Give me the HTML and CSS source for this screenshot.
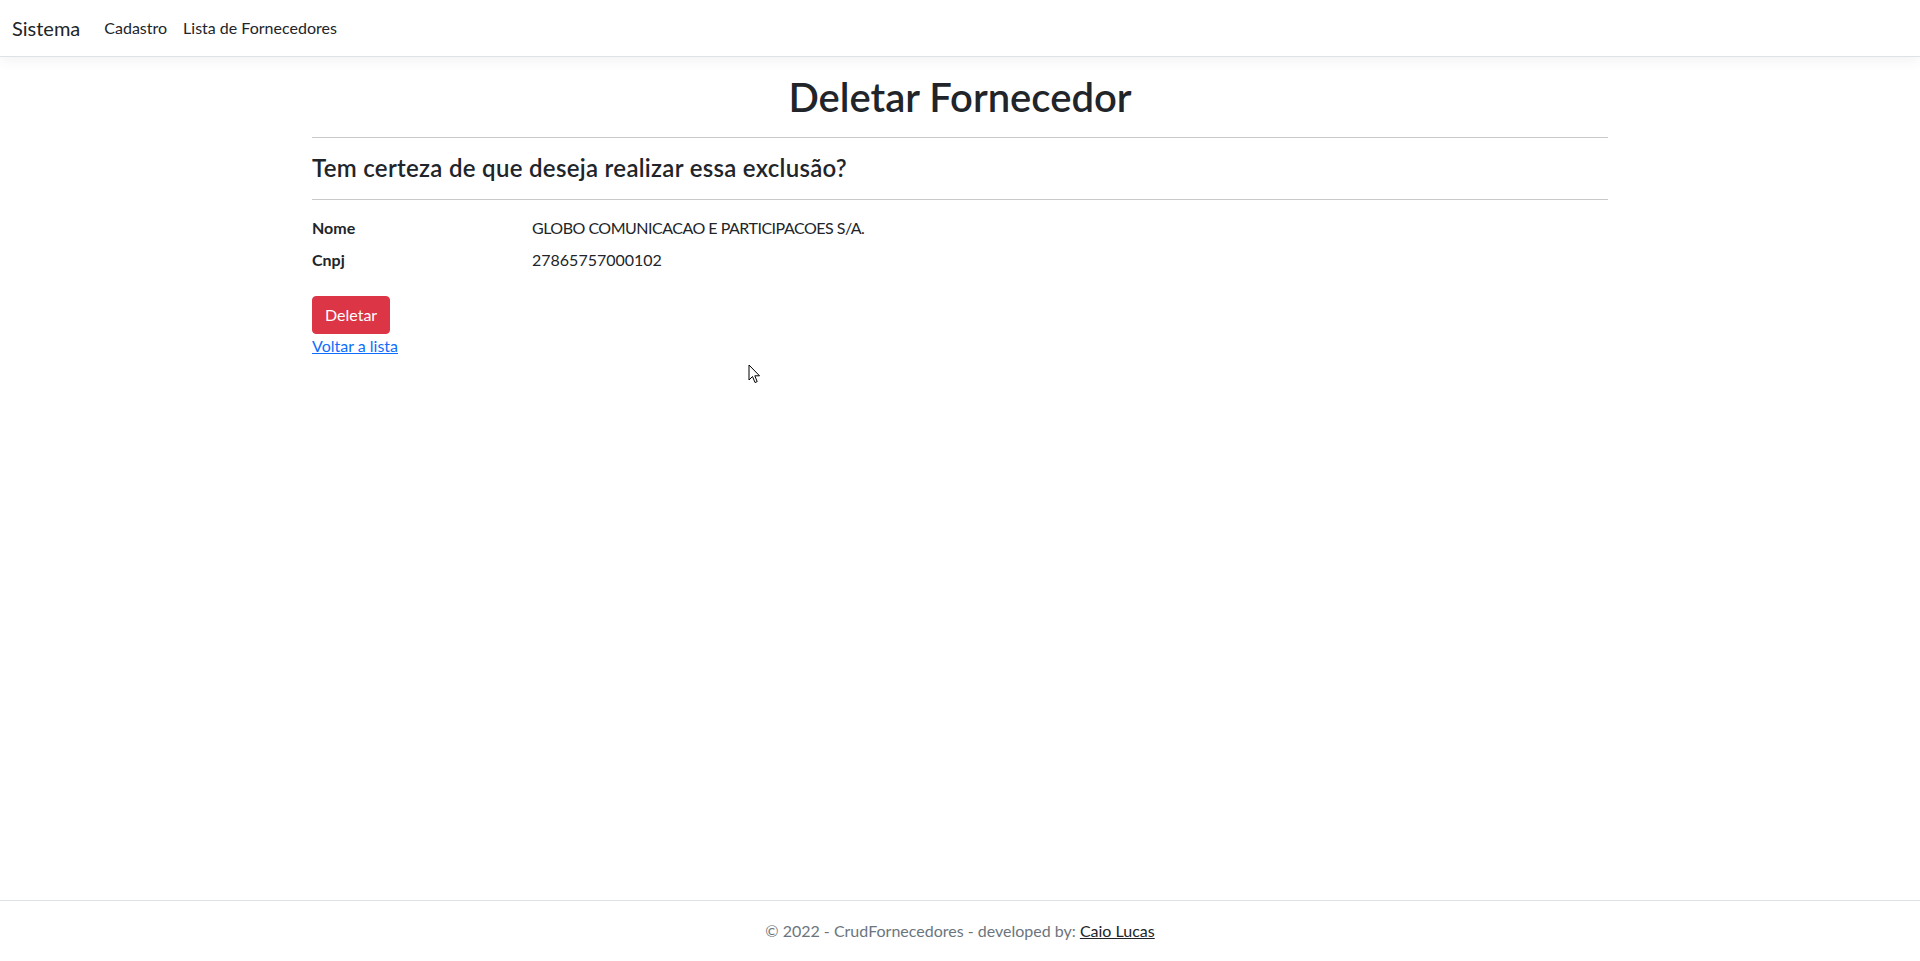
FILE: index.html
```html
<!DOCTYPE html>
<html lang="pt-br">
<head>
<meta charset="utf-8">
<title>Deletar - CrudFornecedores</title>
<link rel="stylesheet" href="styles.css">
</head>
<body>
<header>
  <nav class="navbar">
    <div class="navbar-inner">
      <a class="brand" href="#">Sistema</a>
      <ul class="nav">
        <li><a class="nav-link" href="#">Cadastro</a></li>
        <li><a class="nav-link" href="#">Lista de Fornecedores</a></li>
      </ul>
    </div>
  </nav>
</header>
<div class="container">
  <main>
    <h1 class="title">Deletar Fornecedor</h1>
    <hr class="divider">
    <h4 class="subtitle">Tem certeza de que deseja realizar essa exclusão?</h4>
    <hr class="divider">
    <dl class="details">
      <dt>Nome</dt>
      <dd class="caps">GLOBO COMUNICACAO E PARTICIPACOES S/A.</dd>
      <dt>Cnpj</dt>
      <dd>27865757000102</dd>
    </dl>
    <form class="actions">
      <button type="button" class="btn-danger">Deletar</button>
      <a class="back-link" href="#">Voltar a lista</a>
    </form>
  </main>
</div>
<footer class="footer">
  <div class="footer-inner">&copy; 2022 - CrudFornecedores - developed by: <a class="footer-link" href="#">Caio Lucas</a></div>
</footer>
<svg class="cursor" width="13" height="21" viewBox="0 0 13 21"><path d="M1 1 L1 16 L4.5 12.5 L7 18.5 L9.2 17.6 L6.8 11.8 L11.5 11.8 Z" fill="#fff" stroke="#000" stroke-width="1" stroke-linejoin="round"/></svg>
</body>
</html>
```

FILE: styles.css
```css
html {
  position: relative;
  min-height: 100%;
}

body {
  margin: 0 0 60px;
  font-family: "Lato", "Open Sans", sans-serif;
  font-size: 16px;
  line-height: 1.5;
  color: #212529;
  background: #fff;
}

.navbar {
  padding: 8px 0;
  background: #fff;
  border-bottom: 1px solid #dee2e6;
  box-shadow: 0 4px 12px rgba(0, 0, 0, 0.05);
  margin-bottom: 16px;
}

.navbar-inner {
  display: flex;
  align-items: center;
  padding: 0 12px;
}

.brand {
  font-size: 20px;
  line-height: 30px;
  padding: 5px 0;
  margin-right: 16px;
  color: #212529;
  text-decoration: none;
}

.nav {
  display: flex;
  list-style: none;
  margin: 0;
  padding: 0;
}

.nav-link {
  display: block;
  padding: 8px;
  color: #212529;
  text-decoration: none;
}

.container {
  max-width: 1320px;
  margin: 0 auto;
  padding: 0 12px;
  box-sizing: border-box;
}

.title {
  margin: 0 0 8px;
  font-size: 40px;
  font-weight: 600;
  line-height: 1.2;
  text-align: center;
}

.divider {
  margin: 16px 0;
  border: 0;
  border-top: 1px solid #c8c9ca;
  height: 0;
}

.subtitle {
  margin: 0 0 8px;
  font-size: 24px;
  font-weight: 600;
  line-height: 1.2;
  letter-spacing: 0.3px;
}

.details {
  display: grid;
  grid-template-columns: calc((100% + 24px) / 6 - 24px) 1fr;
  column-gap: 24px;
  margin: 0 0 16px;
}

.details dt {
  font-weight: 700;
  margin-bottom: 8px;
}

.details dd {
  margin: 0 0 8px;
}

.details .caps {
  letter-spacing: -0.5px;
}

.actions {
  margin: 0;
}

.btn-danger {
  display: inline-block;
  font-family: inherit;
  font-size: 16px;
  line-height: 1.5;
  padding: 6px 12px;
  color: #fff;
  background: #dc3545;
  border: 1px solid #dc3545;
  border-radius: 4px;
  cursor: pointer;
}

.back-link {
  display: block;
  width: max-content;
  color: #0d6efd;
  text-decoration: underline;
}

.footer {
  position: absolute;
  bottom: 0;
  width: 100%;
  border-top: 1px solid #dee2e6;
  line-height: 60px;
  white-space: nowrap;
  color: #6c757d;
}

.footer-inner {
  text-align: center;
}

.footer-link {
  color: #212529;
  text-decoration: underline;
}

.cursor {
  position: absolute;
  left: 748px;
  top: 364px;
}
```
